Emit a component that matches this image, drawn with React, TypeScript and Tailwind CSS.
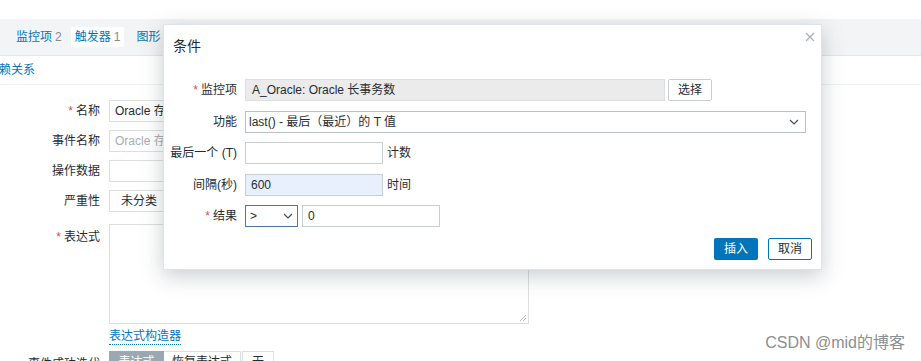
const font = { fontFamily: '"Liberation Sans", Arial, "Noto Sans CJK SC", sans-serif' };

const Chevron = () => (
  <svg width="10" height="6" viewBox="0 0 10 6" className="shrink-0">
    <path d="M1 1 L5 5 L9 1" fill="none" stroke="#44505a" strokeWidth="1.2" />
  </svg>
);

const FormLabel = ({ text, required }: { text: string; required?: boolean }) => (
  <div className="w-[109px] shrink-0 whitespace-nowrap pr-[9px] text-right text-[12px] text-[#1f2c33]">
    {required && <span className="mr-[3px] text-[#d64e4e]">*</span>}
    {text}
  </div>
);

const DialogLabel = ({ text, required }: { text: string; required?: boolean }) => (
  <div className="w-[81px] shrink-0 whitespace-nowrap pr-[8px] text-right text-[12px] text-[#1f2c33]">
    {required && <span className="mr-[3px] text-[#d64e4e]">*</span>}
    {text}
  </div>
);

const ConditionDialog = () => (
  <div className="absolute left-[163px] top-[24px] flex h-[246px] w-[659px] flex-col border border-[#dfe4e7] bg-white shadow-[0_6px_20px_rgba(40,60,70,0.25)]">
    <div className="relative pl-[9px] pt-[9px]">
      <span className="text-[14px] text-[#1f2c33]">条件</span>
      <svg width="10" height="10" viewBox="0 0 10 10" className="absolute right-[6px] top-[7px]">
        <path d="M1 1 L9 9 M9 1 L1 9" stroke="#a9b1b6" strokeWidth="1.3" />
      </svg>
    </div>

    <div className="mt-[21px] flex flex-col gap-[9.5px]">
      <div className="flex items-center">
        <DialogLabel text="监控项" required />
        <div className="flex h-[22px] w-[420px] items-center border border-[#dcdfe1] bg-[#ebebeb] px-[6px] text-[12px] text-[#1f2c33]">
          A_Oracle: Oracle 长事务数
        </div>
        <button className="ml-[3px] h-[22px] w-[44px] rounded-[2px] border border-[#c8ced2] bg-white text-[12px] text-[#1f2c33]">
          选择
        </button>
      </div>

      <div className="flex items-center">
        <DialogLabel text="功能" />
        <div className="flex h-[22px] w-[561px] items-center justify-between border border-[#b8c2c8] bg-white pl-[3px] pr-[6px] text-[12px] text-[#1f2c33]">
          <span>last() - 最后（最近）的 T 值</span>
          <Chevron />
        </div>
      </div>

      <div className="flex items-center">
        <DialogLabel text="最后一个 (T)" />
        <div className="h-[22px] w-[138px] border border-[#c8ced2] bg-white" />
        <span className="ml-[4px] text-[12px] text-[#1f2c33]">计数</span>
      </div>

      <div className="flex items-center">
        <DialogLabel text="间隔(秒)" />
        <div className="flex h-[22px] w-[138px] items-center border border-[#c8ced2] bg-[#e8f0fe] px-[5px] text-[12px] text-[#1f2c33]">
          600
        </div>
        <span className="ml-[4px] text-[12px] text-[#1f2c33]">时间</span>
      </div>

      <div className="flex items-center">
        <DialogLabel text="结果" required />
        <div className="flex h-[22px] w-[53px] items-center justify-between border border-[#4a7a99] bg-white pl-[4px] pr-[4px] text-[12px] text-[#1f2c33]">
          <span>&gt;</span>
          <Chevron />
        </div>
        <div className="ml-[4px] flex h-[22px] w-[138px] items-center border border-[#c8ced2] bg-white px-[5px] text-[12px] text-[#1f2c33]">
          0
        </div>
      </div>
    </div>

    <div className="mt-auto mb-[9px] flex justify-end gap-[10px] pr-[9px]">
      <button className="h-[22px] w-[44px] rounded-[2px] bg-[#0275b8] text-[12px] text-white">插入</button>
      <button className="h-[22px] w-[44px] rounded-[2px] border border-[#0275b8] bg-white text-[12px] text-[#1f2c33]">
        取消
      </button>
    </div>
  </div>
);

export default function App() {
  return (
    <div className="relative h-[361px] w-[921px] overflow-hidden bg-white" style={font}>
      <div className="h-[19px]" />

      {/* Tabs */}
      <div className="flex h-[37px] items-center border-b border-[#e2e6e8] bg-[#f3f4f5] text-[12px]">
        <div className="pl-[16px] pr-[9px]">
          <span className="text-[#0275b8]">监控项</span>
          <span className="ml-[3px] text-[#7f8b92]">2</span>
        </div>
        <div className="flex h-[20px] items-center bg-white px-[4px]">
          <span className="text-[#0275b8]">触发器</span>
          <span className="ml-[3px] text-[#7f8b92]">1</span>
        </div>
        <div className="pl-[12px] text-[#0275b8]">图形</div>
      </div>

      <div className="flex h-[29px] items-center border-b border-[#eef0f1] text-[12px] text-[#0275b8]">
        <span className="-ml-[1px]">赖关系</span>
      </div>

      {/* Form */}
      <div className="mt-[15px] flex flex-col gap-[8px]">
        <div className="flex items-center">
          <FormLabel text="名称" required />
          <div className="flex h-[22px] w-[420px] items-center border border-[#dcdfe1] px-[5px] text-[12px] text-[#1f2c33]">
            Oracle 存
          </div>
        </div>
        <div className="flex items-center">
          <FormLabel text="事件名称" />
          <div className="flex h-[22px] w-[420px] items-center border border-[#dcdfe1] px-[5px] text-[12px] text-[#a5aeb3]">
            Oracle 存
          </div>
        </div>
        <div className="flex items-center">
          <FormLabel text="操作数据" />
          <div className="h-[22px] w-[420px] border border-[#dcdfe1]" />
        </div>
        <div className="flex items-center">
          <FormLabel text="严重性" />
          <div className="flex h-[22px] w-[80px] items-center border border-[#dcdfe1] pl-[11px] text-[12px] text-[#1f2c33]">
            未分类
          </div>
        </div>
        <div className="flex items-start pt-[4px]">
          <div className="pt-[4px]">
            <FormLabel text="表达式" required />
          </div>
          <div className="relative h-[100px] w-[420px] border border-[#dcdfe1]">
            <svg width="8" height="8" viewBox="0 0 8 8" className="absolute bottom-[1px] right-[1px]">
              <path d="M7 1 L1 7 M7 4 L4 7" stroke="#b5bcc0" strokeWidth="1" />
            </svg>
          </div>
        </div>
        <div className="-mt-[3px] flex">
          <div className="w-[109px] shrink-0" />
          <span className="border-b border-dotted border-[#0275b8] text-[12px] leading-[15px] text-[#0275b8]">
            表达式构造器
          </span>
        </div>
        <div className="-mt-[2px] flex items-start">
          <div className="pt-[4px]">
            <FormLabel text="事件成功迭代" />
          </div>
          <div className="flex h-[22px] text-[12px]">
            <div className="flex w-[55px] items-center justify-center border border-[#9aa8b1] bg-[#9aa8b1] text-white">表达式</div>
            <div className="flex w-[77px] items-center justify-center border border-l-0 border-[#dcdfe1] text-[#1f2c33]">恢复表达式</div>
            <div className="ml-[1px] flex w-[32px] items-center justify-center border border-[#dcdfe1] text-[#1f2c33]">无</div>
          </div>
        </div>
      </div>

      <ConditionDialog />

      <div className="absolute bottom-[6px] right-[16px] text-[16px] text-[#8a8f93]">CSDN @mid的博客</div>
    </div>
  );
}
